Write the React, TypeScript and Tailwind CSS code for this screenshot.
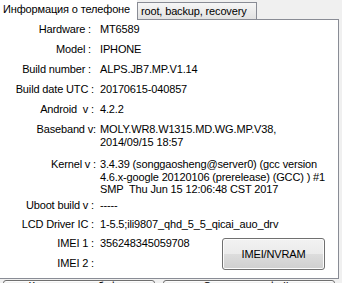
import React from "react";

type Row = { label: string; value: React.ReactNode; h: string; pr: string };

const rows: Row[] = [
  { label: "Hardware :", value: "MT6589", h: "h-[20px]", pr: "pr-[5px]" },
  { label: "Model :", value: "IPHONE", h: "h-[20px]", pr: "pr-[5px]" },
  { label: "Build number :", value: "ALPS.JB7.MP.V1.14", h: "h-[20px]", pr: "pr-[5px]" },
  { label: "Build date UTC :", value: "20170615-040857", h: "h-[20px]", pr: "pr-[2px]" },
  { label: "Android\u00a0 v :", value: "4.2.2", h: "h-[20px]", pr: "pr-[2px]" },
  {
    label: "Baseband v:",
    value: (
      <>
        MOLY.WR8.W1315.MD.WG.MP.V38,
        <br />
        2014/09/15 18:57
      </>
    ),
    h: "h-[35px]",
    pr: "pr-0",
  },
  {
    label: "Kernel v :",
    value: (
      <>
        3.4.39 (songgaosheng@server0) (gcc version
        <br />
        4.6.x-google 20120106 (prerelease) (GCC) ) #1
        <br />
        SMP&nbsp; Thu Jun 15 12:06:48 CST 2017
      </>
    ),
    h: "h-[41px]",
    pr: "pr-0",
  },
  { label: "Uboot build v :", value: "-----", h: "h-[19px]", pr: "pr-[2px]" },
  { label: "LCD Driver IC :", value: "1-5.5;ili9807_qhd_5_5_qicai_auo_drv", h: "h-[19px]", pr: "pr-[2px]" },
];

function InfoRow({ label, value, h, pr }: Row) {
  return (
    <div className={`flex ${h}`}>
      <div className={`w-[97px] shrink-0 text-right whitespace-pre ${pr}`}>{label}</div>
      <div className="pl-[4px] whitespace-nowrap">{value}</div>
    </div>
  );
}

const btn =
  "border border-[#707070] rounded-[3px] bg-[linear-gradient(#f2f2f2,#ebebeb_50%,#dddddd_50%,#cfcfcf)] shadow-[inset_0_0_0_1px_#fcfcfc] text-black";

export default function App() {
  return (
    <div
      className="w-[342px] h-[283px] bg-[#f0f0f0] overflow-hidden text-[11px] leading-[12.5px] text-black tracking-[-0.15px]"
      style={{ fontFamily: '"Liberation Sans", Arial, sans-serif' }}
    >
      {/* tabs */}
      <div className="flex h-[19px] items-start">
        <div className="relative z-10 ml-[-2px] w-[139px] h-[20px] bg-white pl-[5px] pt-[3px] whitespace-nowrap">
          Информация о телефоне
        </div>
        <div className="mt-[2px] w-[120px] h-[17px] border-t border-l border-r border-[#898c95] bg-gradient-to-b from-[#f6f6f6] to-[#e2e2e2] pl-[3px] pt-[2px] whitespace-nowrap">
          root, backup, recovery
        </div>
      </div>

      {/* panel */}
      <div className="ml-[-2px] w-[341px] h-[260px] border border-[#898c95] bg-white pt-[3px]">
        {rows.map((r) => (
          <InfoRow key={r.label} {...r} />
        ))}
        <div className="flex items-start">
          <div className="w-[223px] shrink-0">
            <InfoRow label="IMEI 1 :" value="356248345059708" h="h-[20px]" pr="pr-[2px]" />
            <InfoRow label="IMEI 2 :" value="" h="h-[20px]" pr="pr-[2px]" />
          </div>
          <button className={`${btn} mt-[1px] w-[103px] h-[32px] flex items-center justify-center`}>
            IMEI/NVRAM
          </button>
        </div>
      </div>

      {/* bottom buttons */}
      <div className="flex mt-[1px]">
        <button className={`${btn} ml-[3px] w-[152px] h-[23px] leading-[11px] pt-0 flex justify-center`}>
          Копировать в буфер
        </button>
        <button className={`${btn} ml-[8px] w-[172px] h-[23px] leading-[11px] pt-0 flex justify-center`}>
          Сохранить в файл
        </button>
      </div>
    </div>
  );
}
